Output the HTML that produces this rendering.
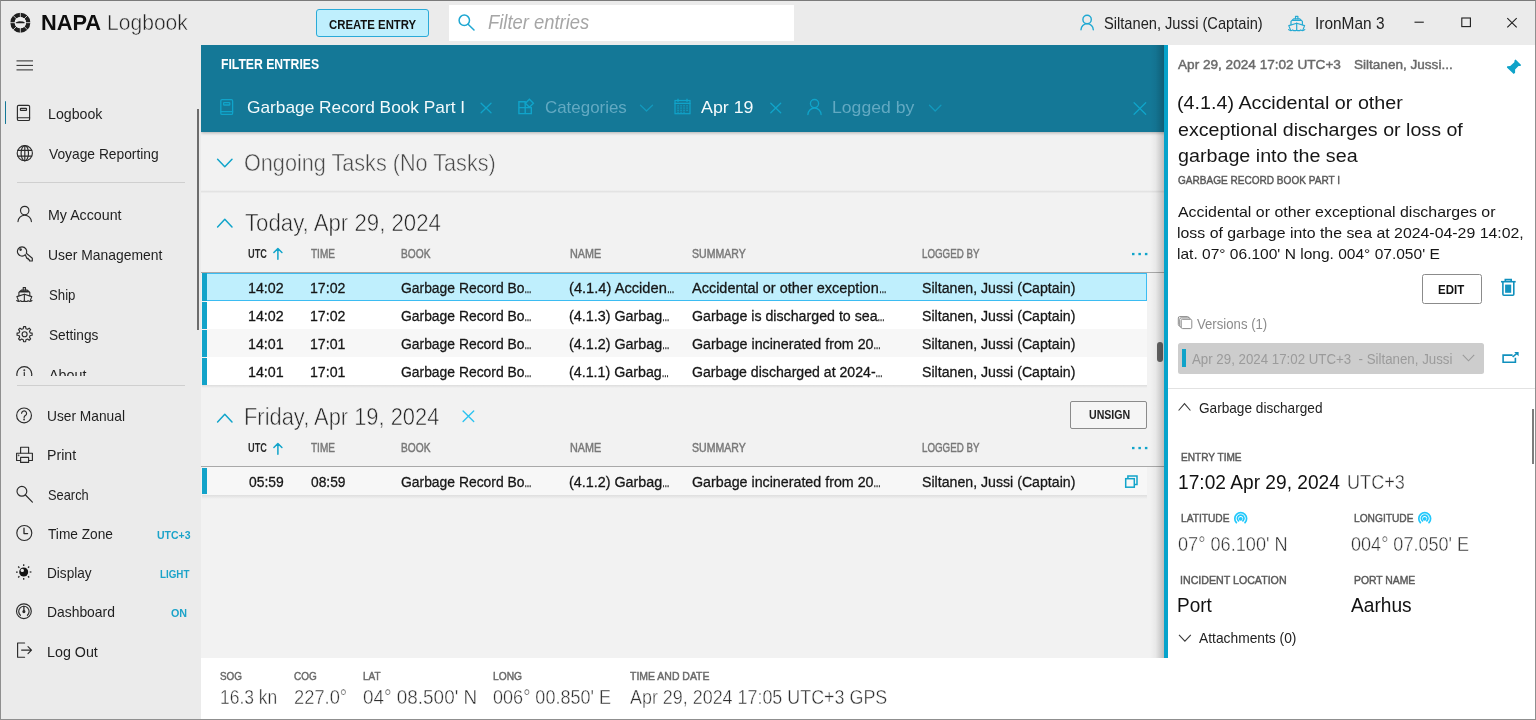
<!DOCTYPE html>
<html lang="en"><head><meta charset="utf-8"><title>NAPA Logbook</title>
<style>
html,body{margin:0;padding:0}
body{width:1536px;height:720px;position:relative;overflow:hidden;background:#ebebeb;font-family:"Liberation Sans",sans-serif}
.a{position:absolute}
.t{position:absolute;white-space:pre;transform-origin:0 0;line-height:20px;height:20px}
svg{position:absolute;overflow:visible}
.k{fill:none;stroke:#2b2b2b;stroke-width:1.15;stroke-linecap:round;stroke-linejoin:round}
.c{fill:none;stroke:#10a4ca;stroke-width:1.3;stroke-linecap:round;stroke-linejoin:round}
.stripe{position:absolute;left:202px;width:4.5px;background:#12a3c9}
.e{display:inline-block;width:.5em;transform:scaleX(.5);transform-origin:0 50%;-webkit-text-stroke:.5px currentColor}
.row{position:absolute;left:206px;width:941px;height:28px}
</style></head><body>

<!-- ================= main background ================= -->
<div class="a" id="main" style="left:201px;top:45px;width:1335px;height:613px;background:#f2f2f2"></div>

<!-- ================= title bar ================= -->
<header id="titlebar">
<svg id="logo" style="left:8px;top:10px" width="25" height="25" viewBox="8 10 25 25">
 <circle cx="20.35" cy="22.65" r="7.85" fill="none" stroke="#1e1e1e" stroke-width="4.3"/>
 <g stroke="#ebebeb" stroke-width="0.8">
  <line x1="20.35" y1="11" x2="20.35" y2="34.5"/><line x1="9" y1="22.65" x2="31.7" y2="22.65"/>
  <line x1="12.3" y1="14.6" x2="28.4" y2="30.7"/><line x1="28.4" y1="14.6" x2="12.3" y2="30.7"/>
 </g>
 <circle cx="20.35" cy="22.65" r="5.6" fill="#ebebeb"/>
 <path d="M15.6 22.4 L18.2 21.6 L19.6 21.3 L23 21.6 L24.9 22.4 L24.3 23.3 L16.3 23.3 Z" fill="#1e1e1e"/>
</svg>
<div class="a" id="create" style="left:316px;top:9px;width:111px;height:26px;border:1px solid #2aaad8;border-radius:3px;background:#bfeffd"></div>
<div class="a" id="searchbox" style="left:449px;top:5px;width:345px;height:36px;background:#fff"></div>
<svg style="left:456px;top:12px" width="22" height="22" viewBox="456 12 22 22"><circle cx="464.3" cy="20.3" r="5.2" class="c" style="stroke:#1ea7d2;stroke-width:1.5"/><line x1="468.1" y1="24.2" x2="474" y2="30" class="c" style="stroke:#1ea7d2;stroke-width:1.5"/></svg>
<svg style="left:1078px;top:12px" width="20" height="22" viewBox="1078 12 20 22"><circle cx="1087.1" cy="19.5" r="4.2" class="c" style="stroke:#1fa8d2;stroke-width:1.4"/><path d="M1081 29.7 A6.15 6.1 0 0 1 1093.3 29.7" class="c" style="stroke:#1fa8d2;stroke-width:1.4"/></svg>
<svg style="left:1286px;top:14px" width="22" height="20" viewBox="1286 14 22 20"><g class="c" style="stroke:#25aad3;stroke-width:1.2">
 <path d="M1295.5 18.8 V16.3 H1297.9 V18.8"/><path d="M1293.6 18.9 H1299.8 L1302.4 21.4 V24.6 M1293.6 18.9 L1291 21.4 V24.6"/><path d="M1292.6 20.4 H1300.8"/>
 <path d="M1288.8 25.6 L1296.7 23.2 L1304.6 25.6 L1303 29.6 M1288.8 25.6 L1290.4 29.6"/><path d="M1296.7 23.2 V30.4"/>
 <path d="M1288.6 29.6 Q1290.6 31.4 1292.6 29.9 Q1294.6 31.4 1296.7 30.2 Q1298.8 31.4 1300.8 29.9 Q1302.8 31.4 1304.8 29.6"/></g></svg>
<svg style="left:1410px;top:14px" width="112" height="16" viewBox="1410 14 112 16"><g fill="none" stroke="#1e1e1e" stroke-width="1.1">
 <line x1="1414.5" y1="22.2" x2="1423.8" y2="22.2"/><rect x="1461.8" y="18" width="8.6" height="8.6"/>
 <path d="M1507.3 18.2 L1516.7 27.4 M1516.7 18.2 L1507.3 27.4"/></g></svg>
</header>

<!-- ================= sidebar ================= -->
<nav id="sidebar">
<svg style="left:16px;top:59px" width="18" height="13" viewBox="16 59 18 13"><g stroke="#2b2b2b" stroke-width="1"><line x1="16.5" y1="60.9" x2="33" y2="60.9"/><line x1="16.5" y1="65.4" x2="33" y2="65.4"/><line x1="16.5" y1="69.9" x2="33" y2="69.9"/></g></svg>
<div class="a" style="left:4.8px;top:101px;width:1.6px;height:23.4px;background:#147896;border-radius:1px"></div>
<div class="a" style="left:197.3px;top:108.8px;width:1.9px;height:221px;background:#6c6c6c"></div>
<div class="a" style="left:17px;top:182px;width:167.5px;height:1px;background:#cfcfcf"></div>
<div class="a" style="left:17px;top:385px;width:167.5px;height:1px;background:#cfcfcf"></div>
<!-- book -->
<svg style="left:16px;top:104px" width="15" height="18" viewBox="16 104 15 18"><g class="k"><rect x="17.4" y="105.3" width="12.2" height="15.2" rx="1.3"/><rect x="20.4" y="108.3" width="6.1" height="2.1" rx=".5"/><line x1="17.4" y1="117.7" x2="29.6" y2="117.7"/></g></svg>
<!-- globe -->
<svg style="left:16px;top:145px" width="18" height="18" viewBox="16 145 18 18"><g class="k"><circle cx="24.8" cy="153.2" r="7.6"/><ellipse cx="24.8" cy="153.2" rx="3.7" ry="7.6"/><line x1="24.8" y1="145.6" x2="24.8" y2="160.8"/><line x1="17.9" y1="150.3" x2="31.7" y2="150.3"/><line x1="17.9" y1="156.1" x2="31.7" y2="156.1"/></g></svg>
<!-- person -->
<svg style="left:16px;top:205px" width="18" height="18" viewBox="16 205 18 18"><g class="k"><circle cx="24.7" cy="210.5" r="4.2"/><path d="M18 221.6 A6.7 6.4 0 0 1 31.4 221.6"/></g></svg>
<!-- key -->
<svg style="left:16px;top:245px" width="18" height="18" viewBox="16 245 18 18"><g class="k"><path d="M25.3 254.7 A4.6 4.6 0 1 1 26.3 253.2 L32.3 258.2 V261 H29.6 V259.7 H28.2 V258.3 H26.8 L25.3 254.7 Z"/><circle cx="20.6" cy="249.6" r=".7" fill="#2b2b2b"/></g></svg>
<!-- ship -->
<svg style="left:16px;top:286px" width="18" height="18" viewBox="16 286 18 18"><g class="k" style="stroke-width:1.1">
 <path d="M23.2 290 V287.6 H25.5 V290"/><path d="M21.4 290.1 H27.3 L29.8 292.5 V295.6 M21.4 290.1 L18.9 292.5 V295.6"/><path d="M20.3 291.6 H28.4" style="stroke-width:1.6"/>
 <path d="M16.9 296.6 L24.35 294.3 L31.8 296.6 L30.3 300.4 M16.9 296.6 L18.4 300.4"/><path d="M24.35 294.3 V301.2"/>
 <path d="M16.7 300.5 Q18.6 302.2 20.5 300.8 Q22.4 302.2 24.35 301 Q26.3 302.2 28.2 300.8 Q30.1 302.2 32 300.5"/></g></svg>
<!-- gear -->
<svg style="left:16px;top:325px" width="18" height="18" viewBox="16 325 18 18"><g class="k"><circle cx="24.6" cy="334.2" r="2.5"/>
<path d="M23.59 326.67 L25.61 326.67 L25.93 328.66 L27.58 329.34 L29.21 328.16 L30.64 329.59 L29.46 331.22 L30.14 332.87 L32.13 333.19 L32.13 335.21 L30.14 335.53 L29.46 337.18 L30.64 338.81 L29.21 340.24 L27.58 339.06 L25.93 339.74 L25.61 341.73 L23.59 341.73 L23.27 339.74 L21.62 339.06 L19.99 340.24 L18.56 338.81 L19.74 337.18 L19.06 335.53 L17.07 335.21 L17.07 333.19 L19.06 332.87 L19.74 331.22 L18.56 329.59 L19.99 328.16 L21.62 329.34 L23.27 328.66 Z"/></g></svg>
<!-- info (clipped) -->
<div class="a" style="left:0;top:360px;width:196px;height:16px;overflow:hidden">
<svg style="left:16px;top:6px" width="18" height="18" viewBox="16 366 18 18"><g class="k"><circle cx="24.3" cy="374.1" r="7.5"/><line x1="24.3" y1="372.6" x2="24.3" y2="378.4"/><circle cx="24.3" cy="370.2" r=".4"/></g></svg>
<!--ABOUT-->
</div>
<!-- help -->
<svg style="left:16px;top:407px" width="18" height="18" viewBox="16 407 18 18"><g class="k"><circle cx="24.05" cy="415.4" r="7.4"/><path d="M21.6 413.3 A2.5 2.5 0 1 1 25.3 415.6 Q24.1 416.3 24.1 417.6"/><circle cx="24.1" cy="419.5" r=".35"/></g></svg>
<!-- print -->
<svg style="left:15px;top:446px" width="19" height="18" viewBox="15 446 19 18"><g class="k"><path d="M20.6 453 V447.2 H28.6 V453"/><path d="M20.6 460.5 H16.6 V453.2 H32.4 V460.5 H28.6"/><rect x="20.6" y="457.4" width="8" height="5"/><circle cx="18.6" cy="455.3" r=".3"/></g></svg>
<!-- search -->
<svg style="left:15px;top:485px" width="19" height="19" viewBox="15 485 19 19"><g class="k"><circle cx="21.9" cy="491.3" r="4.9"/><line x1="25.5" y1="495" x2="32.4" y2="502.2"/></g></svg>
<!-- clock -->
<svg style="left:15px;top:524px" width="19" height="19" viewBox="15 524 19 19"><g class="k"><circle cx="24.3" cy="533" r="7.5"/><path d="M24 528.2 V533.6 H27.6" style="stroke-width:1.3"/></g></svg>
<!-- display -->
<svg style="left:15px;top:563px" width="19" height="19" viewBox="15 563 19 19"><circle cx="23.7" cy="572" r="4.5" fill="#151515"/><circle cx="22.3" cy="570.4" r="1.7" fill="#e8e8e8"/><g stroke="#222" stroke-width="1.25" stroke-linecap="butt">
<line x1="23.7" y1="564.3" x2="23.7" y2="566"/><line x1="23.7" y1="578" x2="23.7" y2="579.7"/><line x1="16" y1="572" x2="17.7" y2="572"/><line x1="29.7" y1="572" x2="31.4" y2="572"/>
<line x1="18.2" y1="566.5" x2="19.4" y2="567.7"/><line x1="28" y1="576.3" x2="29.2" y2="577.5"/><line x1="29.2" y1="566.5" x2="28" y2="567.7"/><line x1="19.4" y1="576.3" x2="18.2" y2="577.5"/></g></svg>
<!-- dashboard -->
<svg style="left:15px;top:602px" width="19" height="19" viewBox="15 602 19 19"><g class="k"><circle cx="23.9" cy="611.2" r="7.4"/><path d="M20.4 615.3 A5.2 5.2 0 1 1 27.4 615.3"/><line x1="23.9" y1="606.3" x2="23.9" y2="611.4" style="stroke-width:1.3"/><circle cx="23.9" cy="611.6" r="1" fill="#2b2b2b"/></g></svg>
<!-- logout -->
<svg style="left:15px;top:641px" width="19" height="19" viewBox="15 641 19 19"><g class="k"><path d="M24.6 643 H17.6 V657.2 H24.6"/><path d="M21.6 650.1 H31.4 M28 646.6 L31.5 650.1 L28 653.6"/></g></svg>
</nav>

<!-- ================= filter header ================= -->
<section id="filter">
<div class="a" style="left:201px;top:45px;width:967px;height:87px;background:#147897;box-shadow:0 1px 3px rgba(0,0,0,.28);clip-path:inset(0 0 -6px 0)"></div>
<svg style="left:219px;top:98px" width="16" height="18" viewBox="219 98 16 18"><g class="c"><rect x="220.8" y="99.7" width="11.8" height="14.7" rx="1.2"/><rect x="223.6" y="102.6" width="6.2" height="2.4" rx=".6"/><line x1="220.8" y1="111.7" x2="232.6" y2="111.7"/></g></svg>
<svg style="left:479px;top:101px" width="14" height="14" viewBox="479 101 14 14"><path class="c" d="M481.1 103.2 L491 112.7 M491 103.2 L481.1 112.7"/></svg>
<svg style="left:516px;top:97px" width="20" height="19" viewBox="516 97 20 19"><g class="c" style="stroke-width:1.4;stroke-linejoin:miter"><path d="M525.2 107.6 V101.7 H518.9 V113.6 H531.3 V107.6 H518.9 M525.2 107.6 V113.6"/><path d="M529.4 99.3 L533.4 103.3 L529.4 107.3 L525.4 103.3 Z"/></g></svg>
<svg style="left:639px;top:103px" width="16" height="10" viewBox="639 103 16 10"><path class="c" style="stroke:#1299bd" d="M640.5 105.3 L646.5 111 L652.5 105.3"/></svg>
<svg style="left:673px;top:98px" width="19" height="18" viewBox="673 98 19 18"><g class="c" style="stroke-width:1.2;stroke-linejoin:miter"><rect x="675" y="100.5" width="15" height="13.2"/><line x1="675" y1="103.4" x2="690" y2="103.4"/><line x1="678" y1="99.2" x2="678" y2="101.5"/><line x1="687" y1="99.2" x2="687" y2="101.5"/></g>
<g fill="#10a4ca"><rect x="677.3" y="105.3" width="1.5" height="1.1"/><rect x="680.3" y="105.3" width="1.5" height="1.1"/><rect x="683.3" y="105.3" width="1.5" height="1.1"/><rect x="686.3" y="105.3" width="1.5" height="1.1"/>
<rect x="677.3" y="107.5" width="1.5" height="1.1"/><rect x="680.3" y="107.5" width="1.5" height="1.1"/><rect x="683.3" y="107.5" width="1.5" height="1.1"/><rect x="686.3" y="107.5" width="1.5" height="1.1"/>
<rect x="677.3" y="109.7" width="1.5" height="1.1"/><rect x="680.3" y="109.7" width="1.5" height="1.1"/><rect x="683.3" y="109.7" width="1.5" height="1.1"/><rect x="686.3" y="109.7" width="1.5" height="1.1"/>
<rect x="677.3" y="111.7" width="1.5" height="1"/><rect x="680.3" y="111.7" width="1.5" height="1"/><rect x="683.3" y="111.7" width="1.5" height="1"/></g></svg>
<svg style="left:769px;top:101px" width="14" height="14" viewBox="769 101 14 14"><path class="c" d="M770.8 103.2 L780.7 112.7 M780.7 103.2 L770.8 112.7"/></svg>
<svg style="left:805px;top:97px" width="20" height="20" viewBox="805 97 20 20"><g class="c"><circle cx="814.5" cy="103.6" r="4.1"/><path d="M807.9 114.6 A6.6 6.6 0 0 1 821.1 114.6"/></g></svg>
<svg style="left:928px;top:103px" width="16" height="10" viewBox="928 103 16 10"><path class="c" style="stroke:#1299bd" d="M929.5 105.3 L935.2 111 L940.9 105.3"/></svg>
<svg style="left:1132px;top:101px" width="16" height="16" viewBox="1132 101 16 16"><path class="c" d="M1134.1 102.8 L1145.7 114.2 M1145.7 102.8 L1134.1 114.2"/></svg>
</section>

<!-- ================= list ================= -->
<section id="list">
<div class="a" style="left:201px;top:189.6px;width:963px;height:3px;background:linear-gradient(#f3f3f3,#e3e3e3 50%,#efefef)"></div>
<svg style="left:216px;top:157px" width="18" height="12" viewBox="216 157 18 12"><path class="c" style="stroke-width:1.5" d="M217.6 159.2 L224.8 166.8 L232 159.2"/></svg>
<svg style="left:216px;top:217px" width="18" height="12" viewBox="216 217 18 12"><path class="c" style="stroke-width:1.5" d="M217.6 226.9 L224.8 219.3 L232 226.9"/></svg>
<svg style="left:216px;top:412px" width="18" height="12" viewBox="216 412 18 12"><path class="c" style="stroke-width:1.5" d="M217.6 421.9 L224.8 414.3 L232 421.9"/></svg>
<svg style="left:272px;top:247px" width="12" height="14" viewBox="272 247 12 14"><path class="c" style="stroke-width:1.5" d="M277.9 259.2 V248.6 M273.9 252.5 L277.9 248.5 L281.9 252.5"/></svg>
<svg style="left:272px;top:441.5px" width="12" height="14" viewBox="272 247 12 14"><path class="c" style="stroke-width:1.5" d="M277.9 259.2 V248.6 M273.9 252.5 L277.9 248.5 L281.9 252.5"/></svg>
<svg style="left:1131px;top:252px" width="18" height="4" viewBox="1131 252 18 4"><g fill="#10a4ca"><rect x="1132" y="252.9" width="2.5" height="2.3"/><rect x="1138.4" y="252.9" width="2.5" height="2.3"/><rect x="1144.9" y="252.9" width="2.5" height="2.3"/></g></svg>
<svg style="left:1131px;top:446.3px" width="18" height="4" viewBox="1131 252 18 4"><g fill="#10a4ca"><rect x="1132" y="252.9" width="2.5" height="2.3"/><rect x="1138.4" y="252.9" width="2.5" height="2.3"/><rect x="1144.9" y="252.9" width="2.5" height="2.3"/></g></svg>
<svg style="left:461px;top:409px" width="15" height="15" viewBox="461 409 15 15"><path d="M463.1 411.1 L473.7 421.5 M473.7 411.1 L463.1 421.5" fill="none" stroke="#2dc3f0" stroke-width="1.4" stroke-linecap="round"/></svg>

<!-- group 1 table -->
<div class="a" style="left:201px;top:272px;width:963px;height:1px;background:#a9a9a9"></div>
<div class="a" style="left:202px;top:385px;width:945px;height:3px;background:linear-gradient(#dcdcdc,#f2f2f2)"></div>
<div class="row" style="top:273px;background:#bfeffd;outline:1px solid #3bbcf2;outline-offset:-1px;left:203px;width:944px;top:273px;height:28px"></div>
<div class="row" style="top:301px;background:#fff"></div>
<div class="row" style="top:329px;background:#f7f7f7"></div>
<div class="row" style="top:357px;background:#fff"></div>
<div class="stripe" style="top:273px;height:27.8px"></div>
<div class="stripe" style="top:301.6px;height:27px"></div>
<div class="stripe" style="top:329.6px;height:27px"></div>
<div class="stripe" style="top:357.6px;height:27px"></div>
<div class="a" style="left:1157px;top:342px;width:5.5px;height:19.5px;border-radius:3px;background:#666"></div>

<!-- group 2 table -->
<div class="a" id="unsign" style="left:1070.2px;top:400.8px;width:75px;height:26px;border:1px solid #8b8b8b;border-radius:2px;background:#f5f5f5"></div>
<div class="a" style="left:201px;top:466px;width:963px;height:1px;background:#a9a9a9"></div>
<div class="a" style="left:202px;top:495px;width:945px;height:4px;background:linear-gradient(#dedede,#f2f2f2)"></div>
<div class="row" style="top:467px;background:#f7f7f7"></div>
<div class="stripe" style="top:468px;height:26.4px"></div>
<svg style="left:1123px;top:474px" width="17" height="16" viewBox="1123 474 17 16"><g fill="none" stroke="#12a4ca" stroke-width="1.5"><path d="M1127.9 478 V475.9 H1137 V484.5 H1135"/><rect x="1125.7" y="478.7" width="8.6" height="8.5"/></g></svg>
</section>

<!-- ================= status bar ================= -->
<footer id="status"><div class="a" style="left:201px;top:658px;width:1335px;height:62px;background:#fff"></div></footer>

<!-- ================= details panel ================= -->
<aside id="detail">
<div class="a" style="left:1150px;top:45px;width:14px;height:613px;background:linear-gradient(90deg,rgba(0,0,0,0),rgba(0,0,0,.04) 40%,rgba(0,0,0,.22))"></div>
<div class="a" style="left:1164px;top:45px;width:372px;height:613px;background:#fff"></div>
<div class="a" style="left:1164px;top:45px;width:4px;height:613px;background:#06a3cb"></div>
<svg style="left:1505px;top:58px" width="18" height="18" viewBox="1505 58 18 18"><path fill="#0fa3c9" d="M1515.6 59.6 L1521.1 64.9 L1520.4 65.9 L1518.5 66.1 L1515.1 69.5 L1515.1 72.8 L1513.7 74 L1506.9 67.4 L1507.2 66.3 L1510.2 66 L1514.3 62.2 L1514.6 60.3 Z"/></svg>
<div class="a" id="edit" style="left:1421.5px;top:273.6px;width:58.3px;height:28.2px;border:1px solid #8b8b8b;border-radius:2.5px;background:#fff"></div>
<svg style="left:1499px;top:277px" width="19" height="21" viewBox="1499 277 19 21"><g fill="none" stroke="#0f90bd" stroke-width="1.6"><path d="M1501 281.7 H1515.7"/><path d="M1505.3 281.5 V279.6 H1511.2 V281.5"/><path d="M1502.9 282 V294.2 Q1502.9 295.2 1503.9 295.2 H1512.8 Q1513.8 295.2 1513.8 294.2 V282"/></g><rect x="1505.1" y="284.6" width="6.1" height="8.2" fill="#1494c0"/></svg>
<svg style="left:1177px;top:315px" width="16" height="15" viewBox="1177 315 16 15"><g fill="#fff" stroke="#8c8c8c" stroke-width="1"><rect x="1178.3" y="316.6" width="10.6" height="9.3" rx="1.4"/><rect x="1179.7" y="317.9" width="10.6" height="9.3" rx="1.4"/><rect x="1181.2" y="319.3" width="10.6" height="9.3" rx="1.4"/></g></svg>
<div class="a" id="dd" style="left:1178px;top:342.5px;width:305.8px;height:31.5px;background:#cdcdcd;border-radius:2.5px"></div>
<div class="a" style="left:1182.3px;top:348.8px;width:4.2px;height:18.3px;background:#10a3c9"></div>
<svg style="left:1461px;top:353px" width="16" height="10" viewBox="1461 353 16 10"><path d="M1462.8 354.9 L1468.5 360.8 L1474.2 354.9" fill="none" stroke="#9a9a9a" stroke-width="1.1"/></svg>
<svg style="left:1500px;top:350px" width="21" height="15" viewBox="1500 350 21 15"><g fill="none" stroke="#0f90bd" stroke-width="1.6"><path d="M1512.6 355.1 H1503.1 V362.3 H1515.4 V357.8"/><path d="M1512.6 357 L1516.6 353.6"/></g><path d="M1514.2 352.1 H1518.6 V356.3 Z" fill="#0f90bd"/></svg>
<div class="a" style="left:1168px;top:388px;width:368px;height:1px;background:#e2e2e2"></div>
<svg style="left:1177px;top:402px" width="15" height="10" viewBox="1177 402 15 10"><path d="M1178.6 410.5 L1184.5 403.7 L1190.4 410.5" fill="none" stroke="#3a3a3a" stroke-width="1.1"/></svg>
<svg style="left:1177px;top:633px" width="15" height="10" viewBox="1177 633 15 10"><path d="M1179 634.8 L1184.9 641.2 L1190.8 634.8" fill="none" stroke="#3a3a3a" stroke-width="1.1"/></svg>
<div class="a" style="left:1531.5px;top:408.7px;width:2.2px;height:55px;background:#7d7d7d"></div>
<svg style="left:1233px;top:511px" width="16" height="13" viewBox="1233 511 16 13"><g fill="none" stroke="#22c8fb" stroke-width="1.7" stroke-linecap="round"><path d="M1236.4 522.6 A5.9 5.9 0 1 1 1245 522.6"/><path d="M1238.5 520.9 A3.3 3.3 0 1 1 1242.9 520.9"/></g><circle cx="1240.7" cy="518.8" r="1.9" fill="#22c8fb"/></svg>
<svg style="left:1416.8px;top:511px" width="16" height="13" viewBox="1233 511 16 13"><g fill="none" stroke="#22c8fb" stroke-width="1.7" stroke-linecap="round"><path d="M1236.4 522.6 A5.9 5.9 0 1 1 1245 522.6"/><path d="M1238.5 520.9 A3.3 3.3 0 1 1 1242.9 520.9"/></g><circle cx="1240.7" cy="518.8" r="1.9" fill="#22c8fb"/></svg>
</aside>

<!-- ================= all text ================= -->
<div id="texts" style="position:absolute;left:0;top:0;width:1536px;height:720px;will-change:transform">
<span class="t" style="left:41.49px;top:13.30px;font-size:21.6px;color:#0d0d0d;transform:scaleX(1.0087);font-weight:bold;">NAPA</span>
<span class="t" style="left:107.03px;top:13.30px;font-size:21.8px;color:#222;transform:scaleX(0.9670);-webkit-text-stroke:0.5px #ebebeb;">Logbook</span>
<span class="t" style="left:328.50px;top:15.05px;font-size:12.9px;color:#111;transform:scaleX(0.8818);font-weight:bold;">CREATE ENTRY</span>
<span class="t" style="left:487.75px;top:12.06px;font-size:19.9px;color:#a6a6a6;transform:scaleX(0.9248);font-style:italic;">Filter entries</span>
<span class="t" style="left:1104.25px;top:13.55px;font-size:15.7px;color:#222;transform:scaleX(0.9334);">Siltanen, Jussi (Captain)</span>
<span class="t" style="left:1314.77px;top:13.55px;font-size:15.7px;color:#222;transform:scaleX(0.9834);">IronMan 3</span>
<span class="t" style="left:48.29px;top:104.32px;font-size:14.8px;color:#1f1f1f;transform:scaleX(0.9579);">Logbook</span>
<span class="t" style="left:49.25px;top:144.32px;font-size:14.8px;color:#1f1f1f;transform:scaleX(0.9326);">Voyage Reporting</span>
<span class="t" style="left:48.29px;top:204.82px;font-size:14.8px;color:#1f1f1f;transform:scaleX(0.9614);">My Account</span>
<span class="t" style="left:48.31px;top:244.82px;font-size:14.8px;color:#1f1f1f;transform:scaleX(0.9390);">User Management</span>
<span class="t" style="left:49.25px;top:284.82px;font-size:14.8px;color:#1f1f1f;transform:scaleX(0.8933);">Ship</span>
<span class="t" style="left:49.25px;top:324.82px;font-size:14.8px;color:#1f1f1f;transform:scaleX(0.9234);">Settings</span>
<div class="a" style="left:40px;top:360px;width:156.0px;height:16.0px;overflow:hidden"><span class="t" style="left:9.25px;top:4.82px;font-size:14.8px;color:#1f1f1f;transform:scaleX(0.9661);">About</span></div>
<span class="t" style="left:47.32px;top:406.07px;font-size:14.8px;color:#1f1f1f;transform:scaleX(0.9292);">User Manual</span>
<span class="t" style="left:47.29px;top:445.32px;font-size:14.8px;color:#1f1f1f;transform:scaleX(0.9552);">Print</span>
<span class="t" style="left:48.25px;top:484.82px;font-size:14.8px;color:#1f1f1f;transform:scaleX(0.8681);">Search</span>
<span class="t" style="left:48.25px;top:523.82px;font-size:14.8px;color:#1f1f1f;transform:scaleX(0.9258);">Time Zone</span>
<span class="t" style="left:47.33px;top:563.32px;font-size:14.8px;color:#1f1f1f;transform:scaleX(0.9196);">Display</span>
<span class="t" style="left:47.31px;top:602.32px;font-size:14.8px;color:#1f1f1f;transform:scaleX(0.9380);">Dashboard</span>
<span class="t" style="left:47.28px;top:641.57px;font-size:14.8px;color:#1f1f1f;transform:scaleX(0.9653);">Log Out</span>
<span class="t" style="left:157.00px;top:524.81px;font-size:10.9px;color:#1ba3c9;transform:scaleX(0.9642);font-weight:bold;">UTC+3</span>
<span class="t" style="left:160.25px;top:564.06px;font-size:10.9px;color:#1ba3c9;transform:scaleX(0.9011);font-weight:bold;">LIGHT</span>
<span class="t" style="left:171.25px;top:603.31px;font-size:10.9px;color:#1ba3c9;transform:scaleX(0.9866);font-weight:bold;">ON</span>
<span class="t" style="left:221.00px;top:54.31px;font-size:14px;color:#fff;transform:scaleX(0.8714);font-weight:bold;">FILTER ENTRIES</span>
<span class="t" style="left:247.00px;top:97.80px;font-size:16.6px;color:#f4fafc;transform:scaleX(1.0418);">Garbage Record Book Part I</span>
<span class="t" style="left:544.50px;top:97.80px;font-size:16.6px;color:#62a9c2;transform:scaleX(1.0194);">Categories</span>
<span class="t" style="left:701.00px;top:97.80px;font-size:16.6px;color:#f4fafc;transform:scaleX(1.0737);">Apr 19</span>
<span class="t" style="left:832.44px;top:97.80px;font-size:16.6px;color:#62a9c2;transform:scaleX(1.0620);">Logged by</span>
<span class="t" style="left:243.60px;top:153.07px;font-size:24px;color:#474747;transform:scaleX(0.9016);-webkit-text-stroke:0.5px #f2f2f2;">Ongoing Tasks (No Tasks)</span>
<span class="t" style="left:245.00px;top:213.05px;font-size:23px;color:#222;transform:scaleX(0.9654);-webkit-text-stroke:0.55px #f2f2f2;">Today, Apr 29, 2024</span>
<span class="t" style="left:244.05px;top:407.30px;font-size:23px;color:#222;transform:scaleX(0.9510);-webkit-text-stroke:0.55px #f2f2f2;">Friday, Apr 19, 2024</span>
<span class="t" style="left:248.25px;top:243.80px;font-size:11.9px;color:#2a2a2a;transform:scaleX(0.7746);font-weight:bold;">UTC</span>
<span class="t" style="left:310.50px;top:243.80px;font-size:11.9px;color:#787878;transform:scaleX(0.8429);-webkit-text-stroke:0.45px currentColor;">TIME</span>
<span class="t" style="left:401.00px;top:243.80px;font-size:11.9px;color:#787878;transform:scaleX(0.8568);-webkit-text-stroke:0.45px currentColor;">BOOK</span>
<span class="t" style="left:570.25px;top:243.80px;font-size:11.9px;color:#787878;transform:scaleX(0.9078);-webkit-text-stroke:0.45px currentColor;">NAME</span>
<span class="t" style="left:691.50px;top:243.80px;font-size:11.9px;color:#787878;transform:scaleX(0.8865);-webkit-text-stroke:0.45px currentColor;">SUMMARY</span>
<span class="t" style="left:921.75px;top:243.80px;font-size:11.9px;color:#787878;transform:scaleX(0.8201);-webkit-text-stroke:0.45px currentColor;">LOGGED BY</span>
<span class="t" style="left:248.25px;top:438.30px;font-size:11.9px;color:#2a2a2a;transform:scaleX(0.7746);font-weight:bold;">UTC</span>
<span class="t" style="left:310.50px;top:438.30px;font-size:11.9px;color:#787878;transform:scaleX(0.8429);-webkit-text-stroke:0.45px currentColor;">TIME</span>
<span class="t" style="left:401.00px;top:438.30px;font-size:11.9px;color:#787878;transform:scaleX(0.8568);-webkit-text-stroke:0.45px currentColor;">BOOK</span>
<span class="t" style="left:570.25px;top:438.30px;font-size:11.9px;color:#787878;transform:scaleX(0.9078);-webkit-text-stroke:0.45px currentColor;">NAME</span>
<span class="t" style="left:691.50px;top:438.30px;font-size:11.9px;color:#787878;transform:scaleX(0.8865);-webkit-text-stroke:0.45px currentColor;">SUMMARY</span>
<span class="t" style="left:921.75px;top:438.30px;font-size:11.9px;color:#787878;transform:scaleX(0.8201);-webkit-text-stroke:0.45px currentColor;">LOGGED BY</span>
<span class="t" style="left:247.82px;top:277.81px;font-size:15.4px;color:#161616;transform:scaleX(0.9268);-webkit-text-stroke:0.3px currentColor;">14:02</span>
<span class="t" style="left:309.58px;top:277.81px;font-size:15.4px;color:#161616;transform:scaleX(0.9200);-webkit-text-stroke:0.3px currentColor;">17:02</span>
<span class="t" style="left:401.00px;top:277.81px;font-size:15.4px;color:#161616;transform:scaleX(0.9020);-webkit-text-stroke:0.3px currentColor;">Garbage Record Bo<span class="e">…</span></span>
<span class="t" style="left:569.00px;top:277.81px;font-size:15.4px;color:#161616;transform:scaleX(0.9526);-webkit-text-stroke:0.3px currentColor;">(4.1.4) Acciden<span class="e">…</span></span>
<span class="t" style="left:691.50px;top:277.81px;font-size:15.4px;color:#161616;transform:scaleX(0.9406);-webkit-text-stroke:0.3px currentColor;">Accidental or other exception<span class="e">…</span></span>
<span class="t" style="left:921.75px;top:277.81px;font-size:15.4px;color:#161616;transform:scaleX(0.9194);-webkit-text-stroke:0.3px currentColor;">Siltanen, Jussi (Captain)</span>
<span class="t" style="left:247.82px;top:305.81px;font-size:15.4px;color:#161616;transform:scaleX(0.9268);-webkit-text-stroke:0.3px currentColor;">14:02</span>
<span class="t" style="left:309.58px;top:305.81px;font-size:15.4px;color:#161616;transform:scaleX(0.9200);-webkit-text-stroke:0.3px currentColor;">17:02</span>
<span class="t" style="left:401.00px;top:305.81px;font-size:15.4px;color:#161616;transform:scaleX(0.9020);-webkit-text-stroke:0.3px currentColor;">Garbage Record Bo<span class="e">…</span></span>
<span class="t" style="left:569.00px;top:305.81px;font-size:15.4px;color:#161616;transform:scaleX(0.9317);-webkit-text-stroke:0.3px currentColor;">(4.1.3) Garbag<span class="e">…</span></span>
<span class="t" style="left:691.50px;top:305.81px;font-size:15.4px;color:#161616;transform:scaleX(0.9230);-webkit-text-stroke:0.3px currentColor;">Garbage is discharged to sea<span class="e">…</span></span>
<span class="t" style="left:921.75px;top:305.81px;font-size:15.4px;color:#161616;transform:scaleX(0.9194);-webkit-text-stroke:0.3px currentColor;">Siltanen, Jussi (Captain)</span>
<span class="t" style="left:247.82px;top:333.81px;font-size:15.4px;color:#161616;transform:scaleX(0.9268);-webkit-text-stroke:0.3px currentColor;">14:01</span>
<span class="t" style="left:309.58px;top:333.81px;font-size:15.4px;color:#161616;transform:scaleX(0.9200);-webkit-text-stroke:0.3px currentColor;">17:01</span>
<span class="t" style="left:401.00px;top:333.81px;font-size:15.4px;color:#161616;transform:scaleX(0.9020);-webkit-text-stroke:0.3px currentColor;">Garbage Record Bo<span class="e">…</span></span>
<span class="t" style="left:569.00px;top:333.81px;font-size:15.4px;color:#161616;transform:scaleX(0.9317);-webkit-text-stroke:0.3px currentColor;">(4.1.2) Garbag<span class="e">…</span></span>
<span class="t" style="left:691.50px;top:333.81px;font-size:15.4px;color:#161616;transform:scaleX(0.9266);-webkit-text-stroke:0.3px currentColor;">Garbage incinerated from 20<span class="e">…</span></span>
<span class="t" style="left:921.75px;top:333.81px;font-size:15.4px;color:#161616;transform:scaleX(0.9194);-webkit-text-stroke:0.3px currentColor;">Siltanen, Jussi (Captain)</span>
<span class="t" style="left:247.82px;top:361.81px;font-size:15.4px;color:#161616;transform:scaleX(0.9268);-webkit-text-stroke:0.3px currentColor;">14:01</span>
<span class="t" style="left:309.58px;top:361.81px;font-size:15.4px;color:#161616;transform:scaleX(0.9200);-webkit-text-stroke:0.3px currentColor;">17:01</span>
<span class="t" style="left:401.00px;top:361.81px;font-size:15.4px;color:#161616;transform:scaleX(0.9020);-webkit-text-stroke:0.3px currentColor;">Garbage Record Bo<span class="e">…</span></span>
<span class="t" style="left:569.00px;top:361.81px;font-size:15.4px;color:#161616;transform:scaleX(0.9270);-webkit-text-stroke:0.3px currentColor;">(4.1.1) Garbag<span class="e">…</span></span>
<span class="t" style="left:691.50px;top:361.81px;font-size:15.4px;color:#161616;transform:scaleX(0.9171);-webkit-text-stroke:0.3px currentColor;">Garbage discharged at 2024-<span class="e">…</span></span>
<span class="t" style="left:921.75px;top:361.81px;font-size:15.4px;color:#161616;transform:scaleX(0.9194);-webkit-text-stroke:0.3px currentColor;">Siltanen, Jussi (Captain)</span>
<span class="t" style="left:248.75px;top:471.81px;font-size:15.4px;color:#161616;transform:scaleX(0.9024);-webkit-text-stroke:0.3px currentColor;">05:59</span>
<span class="t" style="left:310.50px;top:471.81px;font-size:15.4px;color:#161616;transform:scaleX(0.8958);-webkit-text-stroke:0.3px currentColor;">08:59</span>
<span class="t" style="left:401.00px;top:471.81px;font-size:15.4px;color:#161616;transform:scaleX(0.9020);-webkit-text-stroke:0.3px currentColor;">Garbage Record Bo<span class="e">…</span></span>
<span class="t" style="left:569.00px;top:471.81px;font-size:15.4px;color:#161616;transform:scaleX(0.9317);-webkit-text-stroke:0.3px currentColor;">(4.1.2) Garbag<span class="e">…</span></span>
<span class="t" style="left:691.50px;top:471.81px;font-size:15.4px;color:#161616;transform:scaleX(0.9266);-webkit-text-stroke:0.3px currentColor;">Garbage incinerated from 20<span class="e">…</span></span>
<span class="t" style="left:921.75px;top:471.81px;font-size:15.4px;color:#161616;transform:scaleX(0.9194);-webkit-text-stroke:0.3px currentColor;">Siltanen, Jussi (Captain)</span>
<span class="t" style="left:1088.75px;top:404.56px;font-size:12.2px;color:#222;transform:scaleX(0.8691);font-weight:bold;">UNSIGN</span>
<span class="t" style="left:1178.25px;top:55.30px;font-size:13.3px;color:#6a6a6a;transform:scaleX(1.0226);-webkit-text-stroke:0.45px currentColor;">Apr 29, 2024 17:02 UTC+3</span>
<span class="t" style="left:1354.00px;top:55.30px;font-size:13.3px;color:#6a6a6a;transform:scaleX(1.0195);-webkit-text-stroke:0.45px currentColor;">Siltanen, Jussi...</span>
<span class="t" style="left:1177.17px;top:93.06px;font-size:18.3px;color:#161616;transform:scaleX(1.0788);">(4.1.4) Accidental or other</span>
<span class="t" style="left:1178.25px;top:119.56px;font-size:18.3px;color:#161616;transform:scaleX(1.0737);">exceptional discharges or loss of</span>
<span class="t" style="left:1178.25px;top:145.81px;font-size:18.3px;color:#161616;transform:scaleX(1.0775);">garbage into the sea</span>
<span class="t" style="left:1178.25px;top:170.31px;font-size:10.8px;color:#5a5a5a;transform:scaleX(0.9311);-webkit-text-stroke:0.45px currentColor;">GARBAGE RECORD BOOK PART I</span>
<span class="t" style="left:1178.25px;top:201.81px;font-size:15px;color:#161616;transform:scaleX(1.0607);">Accidental or other exceptional discharges or</span>
<span class="t" style="left:1177.19px;top:222.81px;font-size:15px;color:#161616;transform:scaleX(1.0581);">loss of garbage into the sea at 2024-04-29 14:02,</span>
<span class="t" style="left:1177.21px;top:244.31px;font-size:15px;color:#161616;transform:scaleX(1.0357);">lat. 07° 06.100' N long. 004° 07.050' E</span>
<span class="t" style="left:1437.75px;top:279.55px;font-size:12.9px;color:#111;transform:scaleX(0.8902);font-weight:bold;">EDIT</span>
<span class="t" style="left:1197.20px;top:313.60px;font-size:14.8px;color:#8c8c8c;transform:scaleX(0.8896);">Versions (1)</span>
<div class="a" style="left:1188px;top:343px;width:263.6px;height:31.0px;overflow:hidden"><span class="t" style="left:4.00px;top:5.60px;font-size:14px;color:#9b9b9b;transform:scaleX(0.9493);">Apr 29, 2024 17:02 UTC+3  - Siltanen, Jussi (Captain)</span></div>
<span class="t" style="left:1198.75px;top:397.82px;font-size:14.8px;color:#222;transform:scaleX(0.9208);">Garbage discharged</span>
<span class="t" style="left:1181.25px;top:446.56px;font-size:10.8px;color:#5a5a5a;transform:scaleX(0.9348);-webkit-text-stroke:0.45px currentColor;">ENTRY TIME</span>
<span class="t" style="left:1178.01px;top:473.30px;font-size:19.3px;color:#111;transform:scaleX(0.9936);">17:02 Apr 29, 2024</span>
<span class="t" style="left:1347.31px;top:473.30px;font-size:19.3px;color:#2e2e2e;transform:scaleX(0.9393);-webkit-text-stroke:0.42px #fff;">UTC+3</span>
<span class="t" style="left:1181.25px;top:508.31px;font-size:10.8px;color:#5a5a5a;transform:scaleX(0.9426);-webkit-text-stroke:0.45px currentColor;">LATITUDE</span>
<span class="t" style="left:1354.00px;top:508.31px;font-size:10.8px;color:#5a5a5a;transform:scaleX(0.9437);-webkit-text-stroke:0.45px currentColor;">LONGITUDE</span>
<span class="t" style="left:1178.25px;top:535.05px;font-size:19.3px;color:#2e2e2e;transform:scaleX(0.9413);-webkit-text-stroke:0.42px #fff;">07° 06.100' N</span>
<span class="t" style="left:1350.75px;top:535.05px;font-size:19.3px;color:#2e2e2e;transform:scaleX(0.9366);-webkit-text-stroke:0.42px #fff;">004° 07.050' E</span>
<span class="t" style="left:1180.26px;top:570.06px;font-size:10.8px;color:#5a5a5a;transform:scaleX(0.9852);-webkit-text-stroke:0.45px currentColor;">INCIDENT LOCATION</span>
<span class="t" style="left:1354.00px;top:570.06px;font-size:10.8px;color:#5a5a5a;transform:scaleX(0.9602);-webkit-text-stroke:0.45px currentColor;">PORT NAME</span>
<span class="t" style="left:1177.26px;top:596.30px;font-size:19.3px;color:#111;transform:scaleX(0.9856);">Port</span>
<span class="t" style="left:1351.25px;top:596.30px;font-size:19.3px;color:#111;transform:scaleX(0.9925);">Aarhus</span>
<span class="t" style="left:1198.75px;top:628.07px;font-size:14.8px;color:#222;transform:scaleX(0.9329);">Attachments (0)</span>
<span class="t" style="left:220.00px;top:665.80px;font-size:10.6px;color:#6a6a6a;transform:scaleX(0.9332);-webkit-text-stroke:0.45px currentColor;">SOG</span>
<span class="t" style="left:293.75px;top:665.80px;font-size:10.6px;color:#6a6a6a;transform:scaleX(0.9418);-webkit-text-stroke:0.45px currentColor;">COG</span>
<span class="t" style="left:362.50px;top:665.80px;font-size:10.6px;color:#6a6a6a;transform:scaleX(0.9389);-webkit-text-stroke:0.45px currentColor;">LAT</span>
<span class="t" style="left:493.25px;top:665.80px;font-size:10.6px;color:#6a6a6a;transform:scaleX(0.9653);-webkit-text-stroke:0.45px currentColor;">LONG</span>
<span class="t" style="left:629.50px;top:665.80px;font-size:10.6px;color:#6a6a6a;transform:scaleX(0.9882);-webkit-text-stroke:0.45px currentColor;">TIME AND DATE</span>
<span class="t" style="left:219.59px;top:687.55px;font-size:19.3px;color:#2e2e2e;transform:scaleX(0.9061);-webkit-text-stroke:0.42px #fff;">16.3 kn</span>
<span class="t" style="left:293.75px;top:687.55px;font-size:19.3px;color:#2e2e2e;transform:scaleX(0.9502);-webkit-text-stroke:0.42px #fff;">227.0°</span>
<span class="t" style="left:362.50px;top:687.55px;font-size:19.3px;color:#2e2e2e;transform:scaleX(0.9803);-webkit-text-stroke:0.42px #fff;">04° 08.500' N</span>
<span class="t" style="left:493.25px;top:687.55px;font-size:19.3px;color:#2e2e2e;transform:scaleX(0.9366);-webkit-text-stroke:0.42px #fff;">006° 00.850' E</span>
<span class="t" style="left:629.50px;top:687.55px;font-size:19.3px;color:#2e2e2e;transform:scaleX(0.9287);-webkit-text-stroke:0.42px #fff;">Apr 29, 2024 17:05 UTC+3 GPS</span>
</div>

<div class="a" style="left:0;top:0;width:1534px;height:718px;border:1px solid #8f8f8f;border-top-color:#7a7a7a;pointer-events:none"></div>
</body></html>
